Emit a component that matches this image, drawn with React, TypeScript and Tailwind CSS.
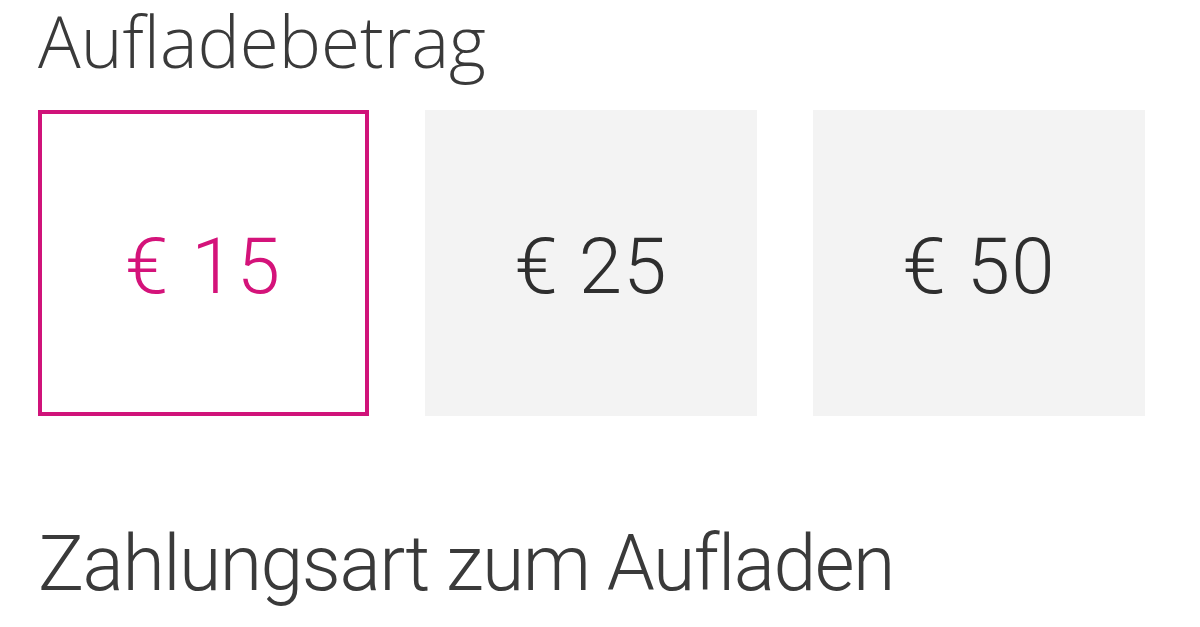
const amounts = [
  { label: '€ 15', selected: true },
  { label: '€ 25', selected: false },
  { label: '€ 50', selected: false },
];

export default function App() {
  return (
    <div className="w-[1200px] h-[627px] overflow-hidden bg-white pl-[38px] pt-[3px] text-[#3a3a3a]">
      <h1 className="font-['Open_Sans',sans-serif] font-light text-[71px] leading-[76px] whitespace-nowrap">
        Aufladebetrag
      </h1>
      <div className="mt-[31px] flex gap-[56px]">
        {amounts.map((a) => (
          <div
            key={a.label}
            className={
              a.selected
                ? 'w-[331px] h-[306px] border-[4px] border-[#d0137a] bg-white flex items-center justify-center pt-2'
                : 'w-[332px] h-[306px] bg-[#f3f3f3] flex items-center justify-center pt-2'
            }
          >
            <span
              className={
                a.selected
                  ? "font-['Roboto',sans-serif] font-light text-[78px] leading-none tracking-[2px] text-[#d4137a] whitespace-pre"
                  : "font-['Roboto',sans-serif] font-light text-[78px] leading-none tracking-[1px] text-[#2e2e2e] whitespace-pre"
              }
            >
              {a.label}
            </span>
          </div>
        ))}
      </div>
      <h2 className="mt-[110px] font-['Roboto',sans-serif] font-light text-[77px] leading-none tracking-[-1.5px] whitespace-nowrap">
        Zahlungsart zum Aufladen
      </h2>
    </div>
  );
}
